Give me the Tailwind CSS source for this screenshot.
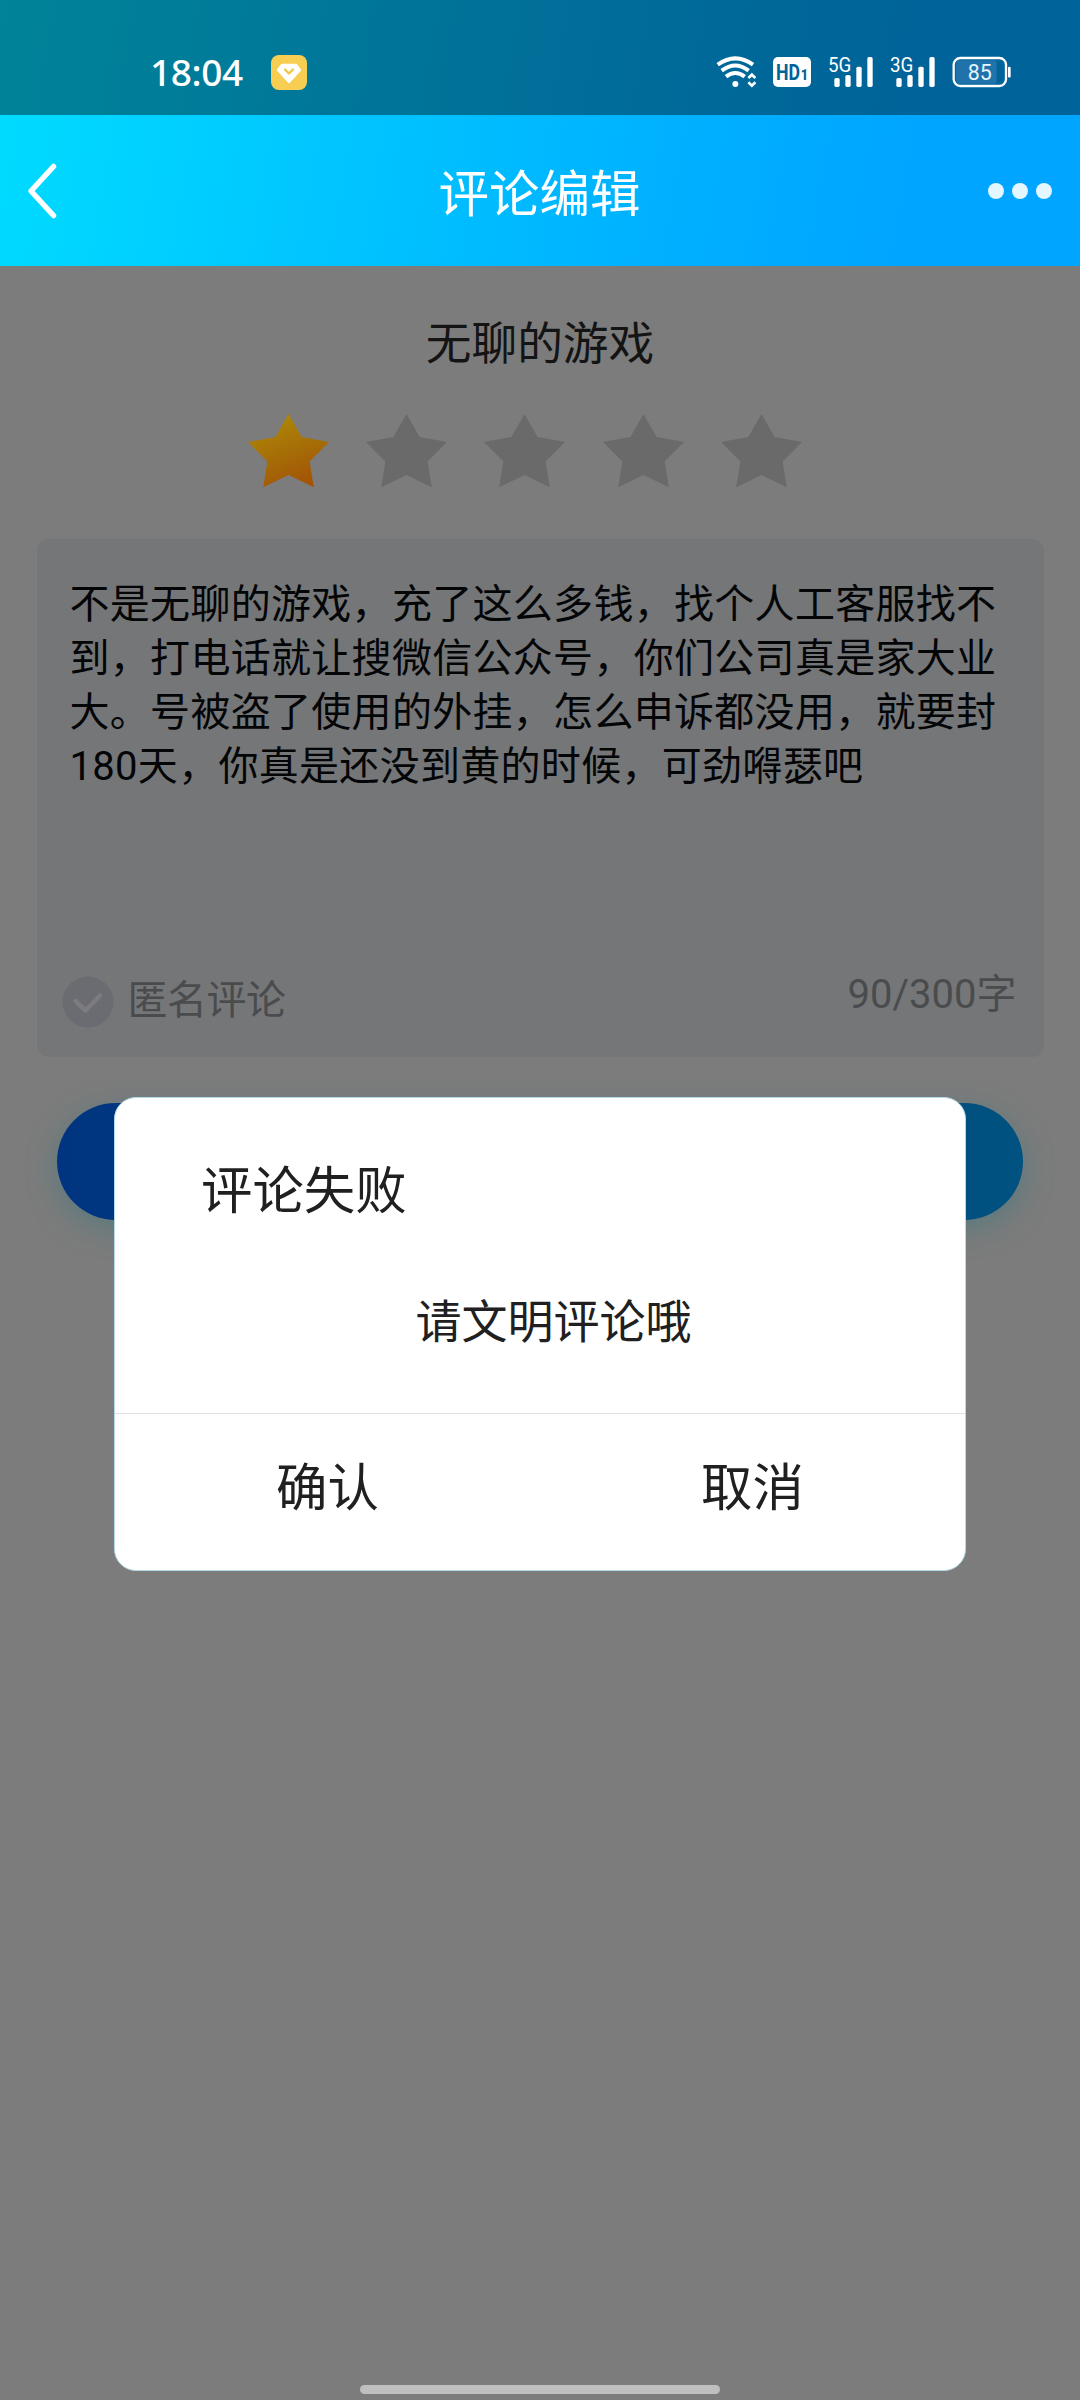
<!DOCTYPE html>
<html lang="zh-CN">
<head>
<meta charset="utf-8">
<title>评论编辑</title>
<script src="https://cdn.jsdelivr.net/npm/@tailwindcss/browser@4"></script>
</head>
<body class="bg-[#7c7c7c] font-['Roboto','Noto_Sans_CJK_SC',sans-serif]">
<div class="relative flex h-[2400px] w-[1080px] flex-col overflow-hidden bg-[#7c7c7c]">

  <header class="flex h-[266px] shrink-0 flex-col bg-[linear-gradient(100deg,#00dcff_0%,#00c4ff_34%,#00b2ff_60%,#00a5ff_84%,#00a5ff_100%)] text-white">
    <!-- status bar -->
    <div class="flex h-[115px] items-start bg-black/40 pl-[150px] pr-[69px]">
      <span class="mt-[48px] w-[121px] font-['Noto_Sans'] text-[37px] font-medium leading-[48px] tracking-[-0.4px]">18:04</span>
      <svg class="mt-[55px] h-[35px] w-9" viewBox="0 0 36 35">
        <rect width="36" height="35" rx="8" fill="#f7ce52"/>
        <path d="M11 10h14l4 5-11 12L7 15z" fill="#fff" stroke="#fff" stroke-width="2.4" stroke-linejoin="round"/>
        <path d="M14 14.5l4 4 4-4" fill="none" stroke="#f2c645" stroke-width="2.4" stroke-linecap="round" stroke-linejoin="round"/>
      </svg>
      <div class="ml-auto mt-[56px] flex">
        <svg class="h-8 w-[41.4px]" viewBox="110 78 124 96" fill="none" stroke="#fff">
          <path d="M115 104Q168 66 221 104" stroke-width="12"/>
          <path d="M127 122Q168 91 208 122" stroke-width="12"/>
          <path d="M140 140Q168 118 196 140" stroke-width="12"/>
          <circle cx="168" cy="162" r="9" fill="#fff" stroke="none"/>
          <path d="M207 144l10.500-10 10.500 10M207 157l10.500 10 10.500-10" stroke-width="8"/>
        </svg>
        <svg class="ml-[15px] h-8 w-[38px]" viewBox="279 78 114 96">
          <rect x="279" y="81" width="114" height="90" rx="15" fill="#fff"/>
          <text x="288" y="149" font-size="64" font-weight="700" textLength="72" lengthAdjust="spacingAndGlyphs" fill="#006398">HD</text>
          <text x="362" y="149" font-size="42" font-weight="900" textLength="22" lengthAdjust="spacingAndGlyphs" fill="#006398">1</text>
        </svg>
        <svg class="ml-[17.700px] h-8 w-[44.700px] overflow-visible" viewBox="446 78 134 96" fill="#fff">
          <text x="446" y="125" font-size="58" textLength="70" lengthAdjust="spacingAndGlyphs">5G</text>
          <rect x="465" y="144" width="16" height="27" rx="5"/><rect x="498" y="135" width="16" height="36" rx="5"/>
          <rect x="531" y="110" width="16" height="61" rx="5"/><rect x="564" y="81" width="16" height="90" rx="5"/>
        </svg>
        <svg class="ml-[17.300px] h-8 w-[44.700px] overflow-visible" viewBox="632 78 134 96" fill="#fff">
          <text x="632" y="125" font-size="58" textLength="70" lengthAdjust="spacingAndGlyphs">3G</text>
          <rect x="651" y="144" width="16" height="27" rx="5"/><rect x="684" y="135" width="16" height="36" rx="5"/>
          <rect x="717" y="110" width="16" height="61" rx="5"/><rect x="750" y="81" width="16" height="90" rx="5"/>
        </svg>
        <svg class="ml-[17px] h-8 w-[59px]" viewBox="817 78 177 96">
          <rect x="829" y="91" width="122" height="70" rx="6" fill="#1f73aa"/>
          <rect x="822" y="84" width="157" height="84" rx="20" fill="none" stroke="#fff" stroke-width="7"/>
          <rect x="985" y="110" width="8" height="33" rx="4" fill="#fff"/>
          <text x="864" y="150" font-size="64" textLength="72" lengthAdjust="spacingAndGlyphs" fill="#e4f6ff">85</text>
        </svg>
      </div>
    </div>
    <!-- title bar -->
    <div class="flex h-[151px] items-center justify-between pl-[26px] pr-7">
      <svg class="h-[58px] w-[34px]" viewBox="0 0 34 58" fill="none" stroke="#fff" stroke-width="5.500" stroke-linecap="round" stroke-linejoin="round"><path d="M27.500 4.500L5 29l22.500 24.500"/></svg>
      <h1 class="pl-[31px] pt-[9px] text-[50.500px] leading-[60px]">评论编辑</h1>
      <div class="flex gap-2">
        <i class="size-4 rounded-full bg-[#e4f6ff]"></i><i class="size-4 rounded-full bg-[#e4f6ff]"></i><i class="size-4 rounded-full bg-[#e4f6ff]"></i>
      </div>
    </div>
  </header>

  <main class="flex flex-col">
    <h2 class="mt-[49px] text-center text-[45.700px] leading-[60px] text-[#141414]">无聊的游戏</h2>
    <svg width="0" height="0" class="absolute">
      <defs>
        <linearGradient id="gold" x1="0.3" y1="0" x2="0.7" y2="1"><stop offset="0.1" stop-color="#ad8407"/><stop offset="0.5" stop-color="#a66e07"/><stop offset="1" stop-color="#a35205"/></linearGradient>
        <path id="star" d="M40.500 0L53.600 23 81 28 61.600 47.500 65.800 73.300 40.500 61 15.200 73.300 19.400 47.500 0 28 27.400 23z"/>
      </defs>
    </svg>
    <div class="mt-[39px] flex gap-[37.200px] pl-[248px]">
      <svg class="h-[74px] w-[81px]" viewBox="0 0 81 74"><use href="#star" fill="url(#gold)"/></svg>
      <svg class="h-[74px] w-[81px]" viewBox="0 0 81 74"><use href="#star" fill="#6a6a6a"/></svg>
      <svg class="h-[74px] w-[81px]" viewBox="0 0 81 74"><use href="#star" fill="#6a6a6a"/></svg>
      <svg class="h-[74px] w-[81px]" viewBox="0 0 81 74"><use href="#star" fill="#6a6a6a"/></svg>
      <svg class="h-[74px] w-[81px]" viewBox="0 0 81 74"><use href="#star" fill="#6a6a6a"/></svg>
    </div>

    <section class="mx-[36.500px] mt-[51px] flex h-[518px] flex-col justify-between rounded-[12px] bg-[#757678] pb-[29px] pl-[25px] pr-[27px] pt-[39px]">
      <p class="whitespace-nowrap pl-[8px] text-[40px] leading-[54px] tracking-[0.3px] text-[#040506]">不是无聊的游戏，充了这么多钱，找个人工客服找不<br>到，打电话就让搜微信公众号，你们公司真是家大业<br>大。号被盗了使用的外挂，怎么申诉都没用，就要封<br>180天，你真是还没到黄的时候，可劲嘚瑟吧</p>
      <div class="flex items-center justify-between text-[40px] leading-[52px] text-[#4a4b4d]">
        <div class="flex items-center">
          <svg class="h-[52px] w-[52px]" viewBox="0 0 52 52"><circle cx="26" cy="26" r="25.500" fill="#6b6b72"/><path d="M13.500 25l10 9.500L38 19.500" fill="none" stroke="#7b7b80" stroke-width="4.500" stroke-linecap="round" stroke-linejoin="round"/></svg>
          <span class="-mt-[3px] ml-[14px] tracking-[-0.5px]">匿名评论</span>
        </div>
        <span class="-mt-[15px]">90/300字</span>
      </div>
    </section>

    <div class="mx-[57px] mt-[46px] h-[117px] rounded-full bg-linear-to-r from-[#003480] to-[#005280] shadow-[0_8px_28px_rgba(60,120,128,0.55)]"></div>
  </main>

  <!-- dialog -->
  <div role="dialog" class="absolute left-[114px] top-[1097px] flex h-[474px] w-[852px] flex-col rounded-[22px] border border-[#b5dbe8] bg-white text-[#202020]">
    <h3 class="pl-[86px] pt-[64px] text-[51.400px] leading-[60px]">评论失败</h3>
    <p class="pl-[27px] pt-[70px] text-center text-[46px] leading-[60px]">请文明评论哦</p>
    <div class="mt-[61px] flex h-[157px] border-t border-[#dfe3e5] text-[51.400px] leading-[60px]">
      <span class="flex-1 pt-[45px] text-center">确认</span>
      <span class="flex-1 pt-[45px] text-center">取消</span>
    </div>
  </div>

  <div class="absolute bottom-[6px] left-[360px] h-[9px] w-[360px] rounded-full bg-[#bfbfbf]"></div>
</div>
</body>
</html>
